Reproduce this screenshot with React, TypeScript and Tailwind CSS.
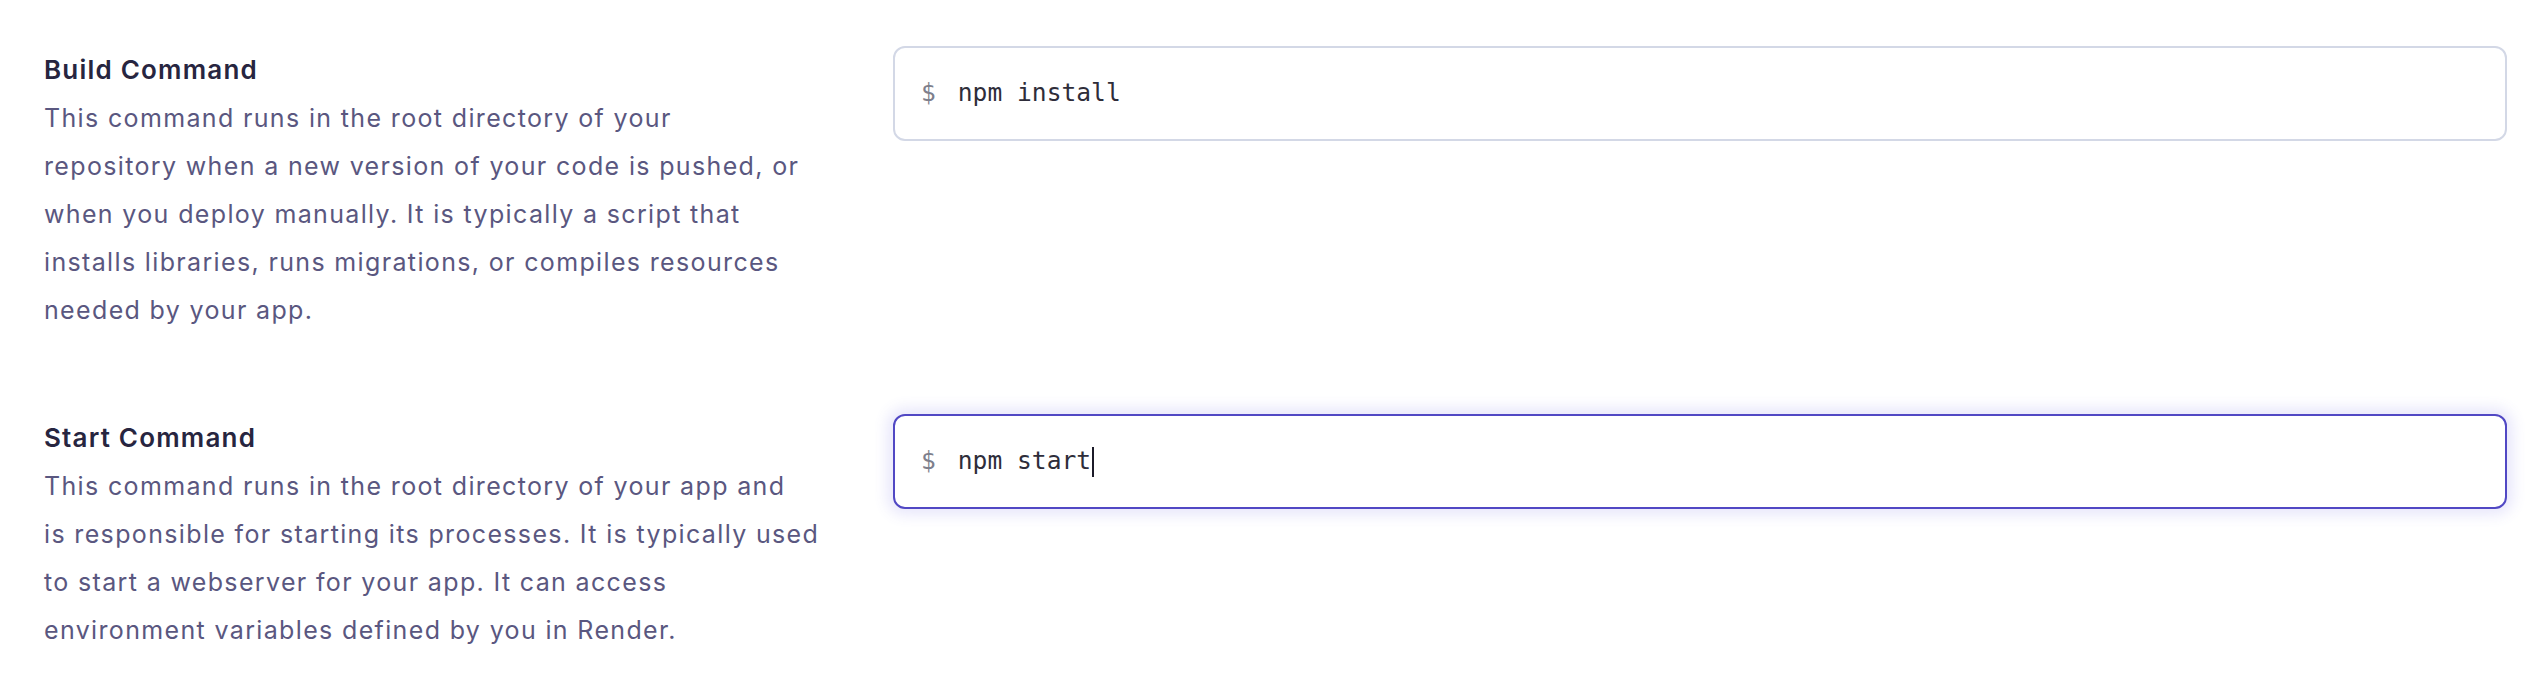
export default function App() {
  return (
    <div className="min-h-screen bg-white pt-[46px] pl-[44px] pr-[36px]" style={{ fontFamily: "Inter, 'Noto Sans', sans-serif" }}>
      <div className="flex flex-col gap-[80px]">
        <Row
          title="Build Command"
          lines={[
            "This command runs in the root directory of your",
            "repository when a new version of your code is pushed, or",
            "when you deploy manually. It is typically a script that",
            "installs libraries, runs migrations, or compiles resources",
            "needed by your app."
          ]}
          value="npm install"
        />
        <Row
          title="Start Command"
          lines={[
            "This command runs in the root directory of your app and",
            "is responsible for starting its processes. It is typically used",
            "to start a webserver for your app. It can access",
            "environment variables defined by you in Render."
          ]}
          value="npm start"
          focused
        />
      </div>
    </div>
  );
}

function Row({
  title,
  lines,
  value,
  focused
}: {
  title: string;
  lines: string[];
  value: string;
  focused?: boolean;
}) {
  return (
    <div className="flex flex-row items-start gap-[80px]">
      <div className="w-[769px] shrink-0 leading-[48px]">
        <div className="text-[26px] font-semibold tracking-[1.2px] text-[#272540]">{title}</div>
        <p className="text-[25px] tracking-[1.35px] text-[#5a5780]">
          {lines.map((line) => (
            <span key={line} className="block whitespace-nowrap">
              {line}
            </span>
          ))}
        </p>
      </div>
      <div
        className={
          focused
            ? "flex h-[95px] flex-1 items-center rounded-[12px] border-2 border-[#5148c4] bg-white pl-[26px] shadow-[0_0_14px_6px_rgba(91,82,230,0.14)]"
            : "flex h-[95px] flex-1 items-center rounded-[12px] border-2 border-[#d3d8e6] bg-white pl-[26px]"
        }
        style={{ fontFamily: "'DejaVu Sans Mono', monospace" }}
      >
        <span className="mr-[22px] text-[24.6px] text-[#7e7f8c]">$</span>
        <span className="text-[24.6px] text-[#2e2d3a]">{value}</span>
        {focused && <span className="ml-[1px] h-[30px] w-[2px] bg-[#1c1b29]" />}
      </div>
    </div>
  );
}
